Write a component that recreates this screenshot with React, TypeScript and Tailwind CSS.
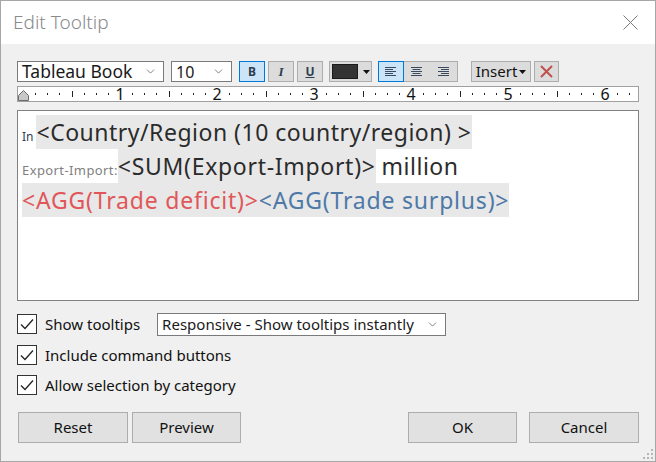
import { ChevronDown } from 'lucide-react';

const ui = { fontFamily: '"Noto Sans", "Open Sans", sans-serif' };

function Select({ label, className }: { label: string; className: string }) {
  return (
    <div className={`flex items-center justify-between bg-white border border-[#7a7a7a] pl-[4px] pr-[6px] text-[#1a1a1a] ${className}`}>
      <span className="leading-none">{label}</span>
      <ChevronDown size={13} strokeWidth={1.5} className="text-[#6a6a6a]" />
    </div>
  );
}

function AlignIcon({ kind }: { kind: 'left' | 'center' | 'right' }) {
  const widths = [11, 8, 11, 8, 11];
  return (
    <svg width="12" height="9" viewBox="0 0 12 9">
      {widths.map((w, i) => {
        const x = kind === 'left' ? 0 : kind === 'right' ? 11 - w : (11 - w) / 2;
        return <rect key={i} x={x} y={i * 2} width={w} height="1" fill="#3a4a5e" />;
      })}
    </svg>
  );
}

function Ruler() {
  const ticks = Array.from({ length: 51 }, (_, i) => i + 1);
  const step = 97 / 8;
  return (
    <div className="relative mt-[4px] h-[16px] bg-white border border-[#a0a0a0]">
      <svg className="absolute inset-0" width="621" height="14">
        {ticks.map((i) => {
          const x = Math.round(5 + i * step);
          if (i % 8 === 0) return null;
          return i % 4 === 0 ? (
            <rect key={i} x={x} y="4" width="1" height="6" fill="#222" />
          ) : (
            <rect key={i} x={x} y="6" width="1" height="2" fill="#222" />
          );
        })}
        <path d="M0.5 13.5 V8.5 L5.5 3.5 L10.5 8.5 V13.5 Z" fill="#c8c8c8" stroke="#6b6b6b" />
      </svg>
      {[1, 2, 3, 4, 5, 6].map((n) => (
        <span
          key={n}
          className="absolute top-[-3px] text-[16px] leading-[20px] text-[#111] -translate-x-1/2"
          style={{ left: Math.round(5 + n * 97) }}
        >
          {n}
        </span>
      ))}
    </div>
  );
}

function Check({ label }: { label: string }) {
  return (
    <div className="flex items-center gap-[8px]">
      <div className="w-[20px] h-[20px] bg-white border border-[#333] flex items-center justify-center">
        <svg width="14" height="12" viewBox="0 0 14 12">
          <path d="M1 6.5 L5 10.5 L13 1.5" fill="none" stroke="#222" strokeWidth="1.3" />
        </svg>
      </div>
      <span className="text-[15px] text-[#111]">{label}</span>
    </div>
  );
}

function Btn({ label, className }: { label: string; className: string }) {
  return (
    <button className={`h-[31px] bg-[#e1e1e1] border border-[#adadad] text-[15px] text-[#111] ${className}`}>
      {label}
    </button>
  );
}

export default function App() {
  return (
    <div style={ui} className="relative w-[656px] h-[462px] bg-[#f0f0f0] border border-[#a6a6a6] flex flex-col overflow-hidden">
      <div className="h-[43px] bg-white flex items-center justify-between pl-[12px] pr-[17px]">
        <span className="text-[19px] text-[#8a8a8a] font-light">Edit Tooltip</span>
        <svg width="15" height="15" viewBox="0 0 15 15">
          <path d="M0.5 0.5 L14.5 14.5 M14.5 0.5 L0.5 14.5" stroke="#7a7a7a" strokeWidth="1" />
        </svg>
      </div>

      <div className="px-[16px] pt-[17px] flex flex-col">
        <div className="flex h-[21px] items-stretch">
          <Select label="Tableau Book" className="w-[147px] text-[17.5px]" />
          <Select label="10" className="ml-[7px] w-[61px] text-[16px]" />
          <div className="ml-[7px] w-[26px] bg-[#cce4f7] border border-[#0078d7] flex items-center justify-center text-[12px] font-bold text-[#2d3e50]">
            B
          </div>
          <div className="ml-[3px] w-[26px] bg-[#dcdcdc] border border-[#adadad] flex items-center justify-center text-[13px] italic font-bold text-[#2d3e50]" style={{ fontFamily: '"Liberation Serif", serif' }}>
            I
          </div>
          <div className="ml-[3px] w-[26px] bg-[#dcdcdc] border border-[#adadad] flex items-center justify-center text-[12px] font-bold underline text-[#2d3e50]">
            U
          </div>
          <div className="ml-[6px] w-[43px] bg-[#dcdcdc] border border-[#adadad] flex items-center pl-[2px] gap-[5px]">
            <div className="w-[26px] h-[15px] bg-[#333] border border-[#1a1a1a]" />
            <svg width="7" height="4" viewBox="0 0 7 4">
              <path d="M0 0 H7 L3.5 4 Z" fill="#111" />
            </svg>
          </div>
          <div className="ml-[6px] w-[80px] flex border border-[#adadad] bg-[#dcdcdc]">
            <div className="w-[26px] -m-px bg-[#cce4f7] border border-[#0078d7] flex items-center justify-center">
              <AlignIcon kind="left" />
            </div>
            <div className="w-[27px] flex items-center justify-center">
              <AlignIcon kind="center" />
            </div>
            <div className="w-[27px] flex items-center justify-center">
              <AlignIcon kind="right" />
            </div>
          </div>
          <div className="ml-[13px] w-[60px] bg-[#dcdcdc] border border-[#adadad] flex items-center justify-center gap-[2px] text-[15px] text-[#111]">
            <span className="leading-none">Insert</span>
            <svg width="7" height="4" viewBox="0 0 7 4">
              <path d="M0 0 H7 L3.5 4 Z" fill="#111" />
            </svg>
          </div>
          <div className="ml-[3px] w-[25px] bg-[#dcdcdc] border border-[#adadad] flex items-center justify-center">
            <svg width="13" height="13" viewBox="0 0 13 13">
              <path d="M1 1 L12 12 M12 1 L1 12" stroke="#c0504d" strokeWidth="2" />
            </svg>
          </div>
        </div>

        <Ruler />

        <div className="mt-[8px] h-[191px] bg-white border border-[#828282] px-[4px] pt-[4px] text-[23px] tracking-[0.5px] leading-[34px] text-[#2b2b2b] whitespace-nowrap">
          <div className="h-[34px]">
            <span className="inline-block h-[34px] pr-[3px] align-top">
              <span className="text-[12px] tracking-normal text-[#2e4057]">In</span>
            </span>
            <span className="inline-block h-[34px] bg-[#e8e8e8] align-top">&lt;Country/Region (10 country/region) &gt;</span>
          </div>
          <div className="h-[34px]">
            <span className="inline-block h-[34px] align-top">
              <span className="text-[13px] tracking-[0.4px] text-[#7f7f7f]">Export-Import:</span>
            </span>
            <span className="inline-block h-[34px] bg-[#e8e8e8] align-top tracking-[0.7px]">&lt;SUM(Export-Import)&gt;</span>
            <span className="inline-block h-[34px] align-top pl-[6px]">million</span>
          </div>
          <div className="h-[34px]">
            <span className="inline-block h-[34px] bg-[#e8e8e8] align-top tracking-[0.8px]">
              <span className="text-[#e15759]">&lt;AGG(Trade deficit)&gt;</span>
              <span className="text-[#4e79a7]">&lt;AGG(Trade surplus)&gt;</span>
            </span>
          </div>
        </div>

        <div className="mt-[11px] h-[24px] flex items-center">
          <Check label="Show tooltips" />
          <Select label="Responsive - Show tooltips instantly" className="ml-[17px] w-[289px] h-[23px] text-[15px]" />
        </div>
        <div className="mt-[7px] h-[24px] flex items-center">
          <Check label="Include command buttons" />
        </div>
        <div className="mt-[6px] h-[24px] flex items-center">
          <Check label="Allow selection by category" />
        </div>

        <div className="mt-[15px] flex">
          <Btn label="Reset" className="ml-[1px] w-[110px]" />
          <Btn label="Preview" className="ml-[4px] w-[109px]" />
          <Btn label="OK" className="ml-auto w-[109px]" />
          <Btn label="Cancel" className="ml-[12px] w-[110px]" />
        </div>
      </div>

      <svg className="absolute right-[2px] bottom-[2px]" width="10" height="10" viewBox="0 0 10 10">
        {[
          [8, 0],
          [8, 4],
          [4, 4],
          [8, 8],
          [4, 8],
          [0, 8],
        ].map(([x, y], i) => (
          <rect key={i} x={x} y={y} width="2" height="2" fill="#b5b5b5" />
        ))}
      </svg>
    </div>
  );
}
